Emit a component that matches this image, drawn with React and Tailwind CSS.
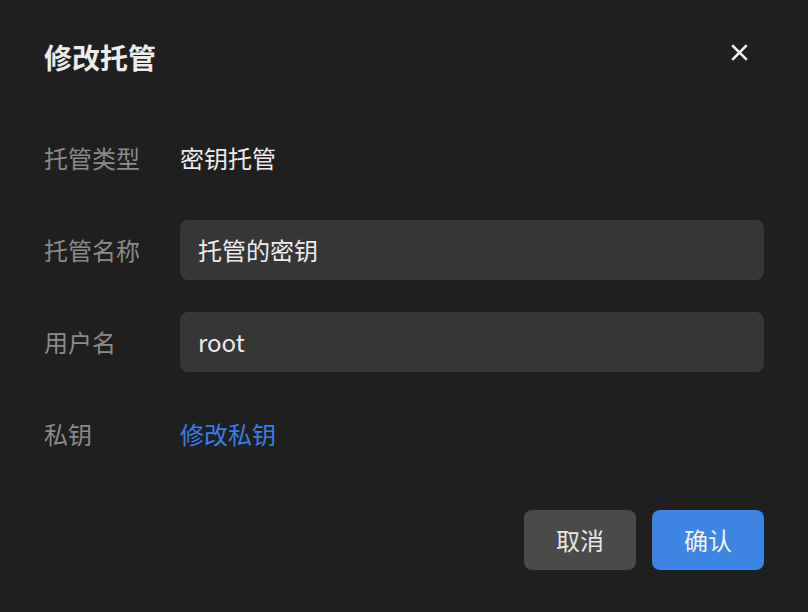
import React from "react";

const FONT = { fontFamily: '"Noto Sans CJK SC", "Noto Sans", sans-serif' };

const Row = ({ label, children }) => (
  <div className="flex h-[60px] items-center">
    <div className="w-[136px] shrink-0 text-[24px] text-[#8a8a8a]">{label}</div>
    <div className="flex-1">{children}</div>
  </div>
);

const App = () => {
  return (
    <div
      className="flex h-[612px] w-[808px] flex-col bg-[#1f1f1f] pl-[44px] pr-[44px] pt-[37px]"
      style={FONT}
    >
      <div className="flex h-[40px] items-center justify-between">
        <h2 className="text-[28px] font-bold text-[#ececec]">修改托管</h2>
        <button className="mr-[16px] mt-[-10px] text-[#f0f0f0]">
          <svg width="17" height="17" viewBox="0 0 16 16" fill="none">
            <path d="M2 2L14 14M14 2L2 14" stroke="currentColor" strokeWidth="2.4" strokeLinecap="square" />
          </svg>
        </button>
      </div>

      <div className="mt-[51px] flex flex-col gap-[32px]">
        <Row label="托管类型">
          <span className="text-[24px] text-[#ececec]">密钥托管</span>
        </Row>
        <Row label="托管名称">
          <div className="flex h-[60px] items-center rounded-[8px] bg-[#363636] px-[18px] text-[24px] text-[#ececec]">
            托管的密钥
          </div>
        </Row>
        <Row label="用户名">
          <div className="flex h-[60px] items-center rounded-[8px] bg-[#363636] px-[18px] text-[24px] text-[#ececec]">
            root
          </div>
        </Row>
        <Row label="私钥">
          <span className="cursor-pointer text-[24px] text-[#3a7ee6]">修改私钥</span>
        </Row>
      </div>

      <div className="mt-[46px] flex justify-end gap-[16px]">
        <button className="h-[60px] w-[112px] rounded-[8px] bg-[#4a4a4a] text-[24px] text-[#e6e6e6]">
          取消
        </button>
        <button className="h-[60px] w-[112px] rounded-[8px] bg-[#3d84e3] text-[24px] text-[#f2f2f2]">
          确认
        </button>
      </div>
    </div>
  );
};

export default App;
